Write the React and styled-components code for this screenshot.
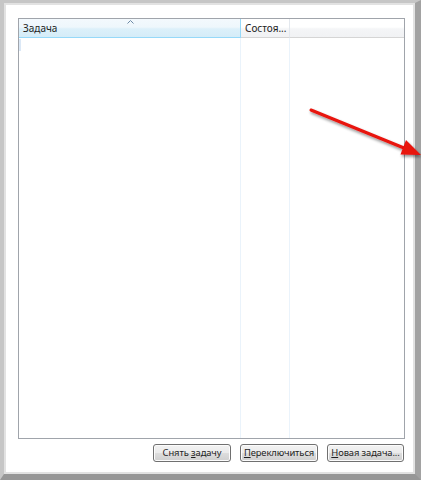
import React from 'react'
import styled, { createGlobalStyle } from 'styled-components'

const GlobalStyle = createGlobalStyle`
  html, body {
    margin: 0;
    padding: 0;
    background: #ffffff;
  }
  body {
    font-family: "Segoe UI", "Noto Sans", "Liberation Sans", sans-serif;
    font-size: 10px;
    color: #1e1e1e;
  }
`

const Screen = styled.div`
  position: relative;
  width: 421px;
  height: 480px;
  overflow: hidden;
`

const Frame = styled.div`
  width: 421px;
  height: 480px;
  box-sizing: border-box;
  border-top: 3px solid #c6c6c6;
  border-left: 4px solid #c6c6c6;
  border-right: 6px solid #a2a2a2;
  border-bottom: 6px solid #979797;
`

const Panel = styled.div`
  height: 100%;
  box-sizing: border-box;
  border: 2px solid #e2e2e2;
  background: #ffffff;
  padding: 13px 8px 10px 12px;
  display: flex;
  flex-direction: column;
  gap: 5px;
`

const ListView = styled.div`
  flex: 1;
  border: 1px solid #a0a4ab;
  display: flex;
  flex-direction: column;
  background: #fff;
`

const HeaderRow = styled.div`
  display: flex;
  height: 19px;
`

const HeaderCell = styled.div`
  position: relative;
  box-sizing: border-box;
  width: ${p => (p.$grow ? 'auto' : `${p.$w}px`)};
  flex: ${p => (p.$grow ? 1 : 'none')};
  padding: 0 0 0 4px;
  display: flex;
  align-items: center;
  white-space: nowrap;
  overflow: hidden;
  color: #1e1e1e;
  background: ${p =>
    p.$sorted
      ? 'linear-gradient(#f3f9fd 0%, #eef7fc 45%, #dcf0fa 55%, #d5ecf8 100%)'
      : 'linear-gradient(#ffffff 0%, #ffffff 45%, #f4f5f7 55%, #f1f2f4 100%)'};
  border-bottom: 1px solid ${p => (p.$sorted ? '#96d9f9' : '#d5d5d5')};
  border-right: ${p => (p.$grow ? 'none' : `1px solid ${p.$sorted ? '#96d9f9' : '#e3e8ee'}`)};
`

const SortArrow = styled.svg`
  position: absolute;
  top: 1px;
  left: 50%;
  margin-left: -3px;
`

const Body = styled.div`
  flex: 1;
  position: relative;
  display: flex;
`

const Column = styled.div`
  box-sizing: border-box;
  width: ${p => (p.$grow ? 'auto' : `${p.$w}px`)};
  flex: ${p => (p.$grow ? 1 : 'none')};
  border-right: ${p => (p.$grow ? 'none' : '1px solid #eaf3fb')};
`

const FocusMark = styled.div`
  position: absolute;
  left: 0;
  top: 1px;
  width: 2px;
  height: 12px;
  background: #dbe8f6;
`

const ButtonRow = styled.div`
  display: flex;
  justify-content: flex-end;
  gap: 9px;
  padding-right: 1px;
`

const Button = styled.button`
  box-sizing: border-box;
  width: ${p => p.$w}px;
  height: 18px;
  padding: 0;
  border: 1px solid #707070;
  border-radius: 3px;
  background: linear-gradient(#f2f2f2 0%, #ebebeb 48%, #dddddd 52%, #cfcfcf 100%);
  box-shadow: inset 0 0 0 1px #fcfcfc;
  font-family: "Segoe UI", "Noto Sans", "Liberation Sans", sans-serif;
  font-size: 9.4px;
  letter-spacing: -0.1px;
  color: #1e1e1e;
  line-height: 14px;
  white-space: nowrap;

  u {
    text-decoration: underline;
    text-underline-offset: 1px;
  }
`

const Arrow = styled.svg`
  position: absolute;
  left: 300px;
  top: 100px;
`

export default function App() {
  return (
    <>
      <GlobalStyle />
      <Screen>
        <Frame>
          <Panel>
            <ListView>
              <HeaderRow>
                <HeaderCell $w={222} $sorted>
                  <SortArrow width="7" height="4" viewBox="0 0 7 4">
                    <path d="M0.5 3.5 L3.5 0.5 L6.5 3.5" fill="none" stroke="#6d8aa6" strokeWidth="1" />
                  </SortArrow>
                  Задача
                </HeaderCell>
                <HeaderCell $w={49}>Состоя...</HeaderCell>
                <HeaderCell $grow />
              </HeaderRow>
              <Body>
                <FocusMark />
                <Column $w={222} />
                <Column $w={49} />
                <Column $grow />
              </Body>
            </ListView>
            <ButtonRow>
              <Button $w={78}>Снять <u>з</u>адачу</Button>
              <Button $w={78}><u>П</u>ереключиться</Button>
              <Button $w={77}><u>Н</u>овая задача...</Button>
            </ButtonRow>
          </Panel>
        </Frame>
        <Arrow width="121" height="62" viewBox="0 0 121 62">
          <defs>
            <filter id="sh" x="-20%" y="-50%" width="140%" height="200%">
              <feGaussianBlur in="SourceAlpha" stdDeviation="1.5" />
              <feOffset dx="1" dy="2" result="b" />
              <feComponentTransfer>
                <feFuncA type="linear" slope="0.45" />
              </feComponentTransfer>
              <feMerge>
                <feMergeNode />
                <feMergeNode in="SourceGraphic" />
              </feMerge>
            </filter>
          </defs>
          <g filter="url(#sh)">
            <line x1="11" y1="10" x2="104" y2="48" stroke="#e8120e" strokeWidth="3" strokeLinecap="round" />
            <polygon points="121,55 100.5,54.5 106,40" fill="#e8120e" />
          </g>
        </Arrow>
      </Screen>
    </>
  )
}
